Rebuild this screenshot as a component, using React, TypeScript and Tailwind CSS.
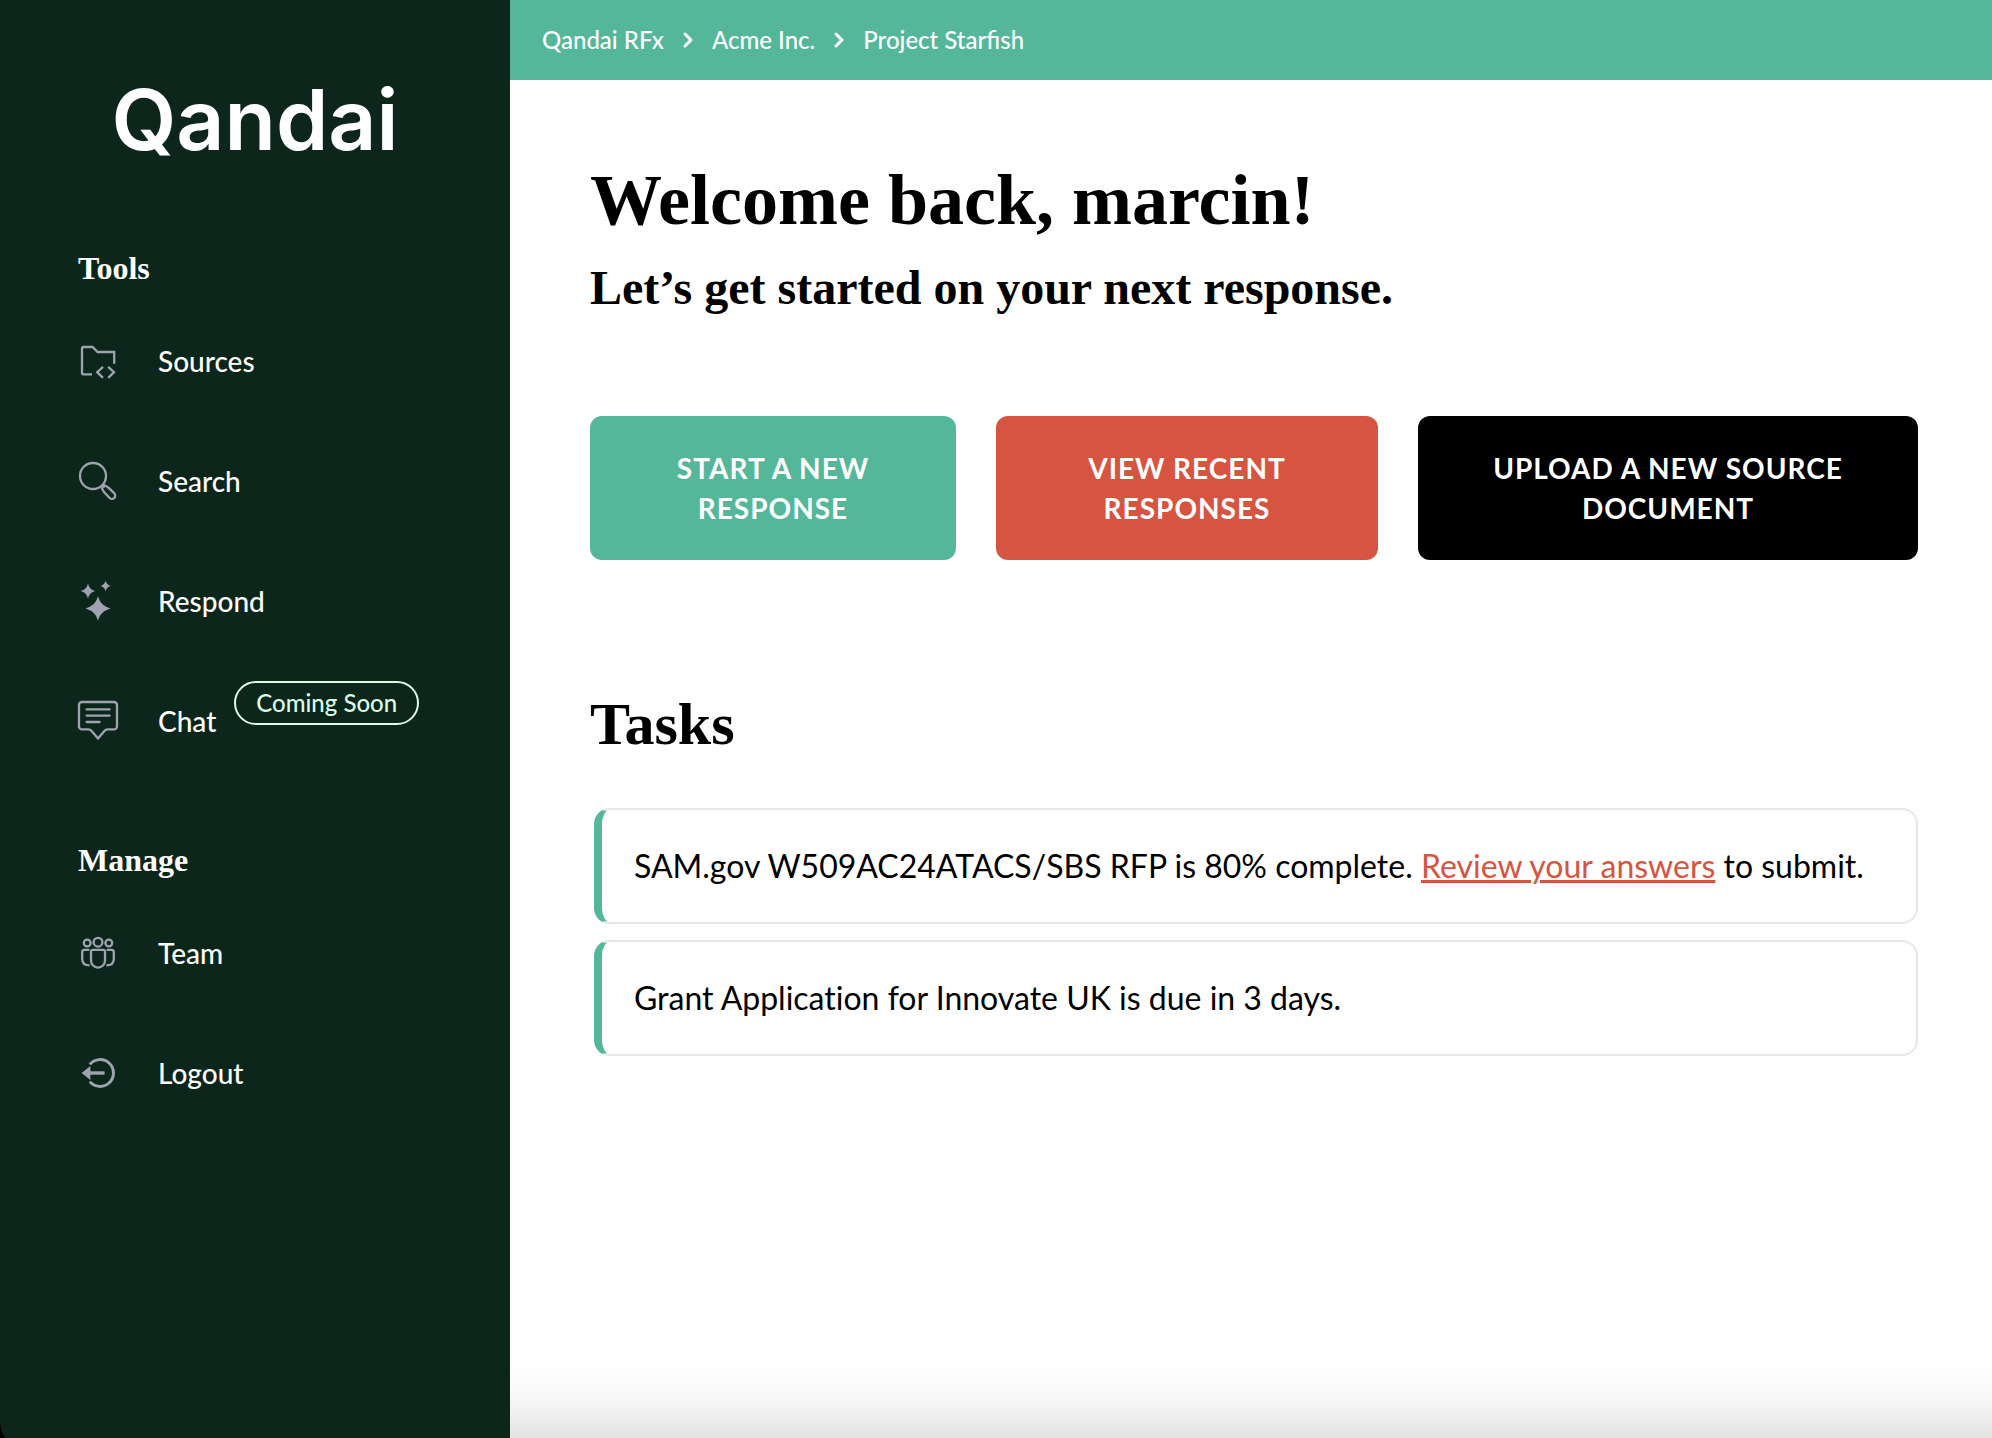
import { Fragment, type ReactNode } from "react";
import { ChevronRight } from "lucide-react";

const serif = "font-['Liberation_Serif',serif]";

type NavItem = { label: string; icon: ReactNode; badge?: string };

function Icon({ children }: { children: ReactNode }) {
  return (
    <svg
      aria-hidden
      viewBox="0 0 40 40"
      className="size-10 shrink-0 overflow-visible text-[#9fa3b0]"
      fill="none"
      stroke="currentColor"
      strokeWidth="2.3"
    >
      {children}
    </svg>
  );
}

const SourcesIcon = () => (
  <Icon>
    <path d="M14 32.4H5.2A1.2 1.2 0 0 1 4 31.2V6.2A1.2 1.2 0 0 1 5.2 5H14.6L19.6 10H36.2V21.8" />
    <path d="M25 24.8L19.2 30.2L25 35.8M30.2 24.8L36 30.2L30.2 35.8" />
  </Icon>
);

const SearchIcon = () => (
  <Icon>
    <circle cx="15" cy="14" r="13" />
    <path d="M23.6 25.2C24.2 27.4 25 28.8 26.2 30.2L31.4 35.8A3.3 3.3 0 0 0 36.4 31.4L31 26.2C29.6 24.8 28.2 23.8 26 23" />
    <path d="M23.6 22.6L26.6 25.6" />
  </Icon>
);

const RespondIcon = () => (
  <Icon>
    <g fill="currentColor" stroke="none">
      <path d="M20 14C22 21 25.4 24.2 32.4 26.4C25.4 28.6 22 31.8 20 38.8C18 31.8 14.6 28.6 7.6 26.4C14.6 24.2 18 21 20 14Z" />
      <path d="M10 1.4C11.3 6 13 7.6 17.4 9C13 10.4 11.3 12 10 16.6C8.7 12 7 10.4 2.6 9C7 7.6 8.7 6 10 1.4Z" />
      <path d="M27.6 -1.2C28.5 1.8 29.7 3 32.8 4C29.7 5 28.5 6.2 27.6 9.2C26.7 6.2 25.5 5 22.4 4C25.5 3 26.7 1.8 27.6 -1.2Z" />
    </g>
  </Icon>
);

const ChatIcon = () => (
  <Icon>
    <path d="M4 0H36A3 3 0 0 1 39 3V24.4A3 3 0 0 1 36 27.4H29.6C28.2 27.4 27.4 27.8 26.6 28.8L20 36.4L13.4 28.8C12.6 27.8 11.8 27.4 10.4 27.4H4A3 3 0 0 1 1 24.4V3A3 3 0 0 1 4 0Z" />
    <path d="M8.6 7.4H31.6M8.6 13.6H31.6M8.6 20H21.6" strokeLinecap="round" />
  </Icon>
);

const TeamIcon = () => (
  <Icon>
    <circle cx="20" cy="8.2" r="4.4" />
    <circle cx="9.2" cy="9" r="3.4" />
    <circle cx="30.8" cy="9" r="3.4" />
    <path d="M14.8 15.8H25.2A1.8 1.8 0 0 1 27 17.6V26.6A7 7 0 0 1 13 26.6V17.6A1.8 1.8 0 0 1 14.8 15.8Z" />
    <path d="M11.4 15.8H6.4A2.2 2.2 0 0 0 4.2 18V25C4.2 28.8 6.6 31.4 11.6 31.4" />
    <path d="M28.6 15.8H33.6A2.2 2.2 0 0 1 35.8 18V25C35.8 28.8 33.4 31.4 28.4 31.4" />
  </Icon>
);

const LogoutIcon = () => (
  <Icon>
    <path d="M11.8 10.4A13.4 13.4 0 1 1 11.8 27.6" strokeWidth="3" />
    <path d="M11 19H26.6" strokeWidth="3.4" />
    <path d="M3.6 19L12.4 12V26Z" fill="currentColor" stroke="none" />
  </Icon>
);

const tools: NavItem[] = [
  { label: "Sources", icon: <SourcesIcon /> },
  { label: "Search", icon: <SearchIcon /> },
  { label: "Respond", icon: <RespondIcon /> },
  { label: "Chat", icon: <ChatIcon />, badge: "Coming Soon" },
];

const manage: NavItem[] = [
  { label: "Team", icon: <TeamIcon /> },
  { label: "Logout", icon: <LogoutIcon /> },
];

const crumbs = ["Qandai RFx", "Acme Inc.", "Project Starfish"];

const actions = [
  { label: "Start a new response", color: "bg-[#55b799]" },
  { label: "View recent responses", color: "bg-[#d65440]" },
  { label: "Upload a new source document", color: "bg-black" },
];

function NavSection({ title, items }: { title: string; items: NavItem[] }) {
  return (
    <section>
      <h2 className={`${serif} text-[32px] leading-8 font-bold`}>{title}</h2>
      <ul className="mt-[18px]">
        {items.map((item) => (
          <li key={item.label}>
            <a href="#" className="flex h-[120px] items-center">
              {item.icon}
              <span className="ml-10 pb-0.5 text-[28px] font-medium">{item.label}</span>
              {item.badge && (
                <span className="mb-[38px] ml-[18px] flex h-11 items-center rounded-full border-2 border-[#dcfce7] px-5 text-2xl font-medium text-[#dcfce7]">
                  {item.badge}
                </span>
              )}
            </a>
          </li>
        ))}
      </ul>
    </section>
  );
}

function Sidebar() {
  return (
    <aside className="w-[510px] shrink-0 bg-black text-white">
      <div className="h-full rounded-bl-[7px_18px] bg-[#0c261b] px-[78px] pt-[68px]">
        <a href="#" className="block text-center font-['Inter',sans-serif] text-[84px] leading-[104px] font-semibold">
          Qandai
        </a>
        <nav className="mt-20 flex flex-col gap-[62px]">
          <NavSection title="Tools" items={tools} />
          <NavSection title="Manage" items={manage} />
        </nav>
      </div>
    </aside>
  );
}

function Breadcrumbs() {
  return (
    <nav aria-label="Breadcrumb" className="flex h-20 items-center gap-3 bg-[#55b799] px-8 text-2xl font-medium text-white">
      {crumbs.map((crumb, i) => (
        <Fragment key={crumb}>
          {i > 0 && <ChevronRight aria-hidden className="size-6" strokeWidth={3} />}
          <a href="#">{crumb}</a>
        </Fragment>
      ))}
    </nav>
  );
}

function Task({ children }: { children: ReactNode }) {
  return (
    <li className="rounded-2xl border-2 border-l-8 border-[#e5e7eb] border-l-[#55b799] px-8 py-9 text-[32px] leading-10 [font-variant-ligatures:no-common-ligatures]">
      {children}
    </li>
  );
}

export default function App() {
  return (
    <div className="relative flex min-h-screen bg-white font-['Lato',sans-serif] text-black">
      <Sidebar />
      <div className="min-w-0 flex-1">
        <Breadcrumbs />
        <main className="pt-20 pr-[74px] pl-20">
          <h1 className={`${serif} text-[72px] leading-20 font-bold`}>Welcome back, marcin!</h1>
          <p className={`${serif} mt-6 text-[48px] leading-12 font-bold`}>Let’s get started on your next response.</p>

          <div className="mt-[104px] grid grid-cols-[366fr_382fr_500fr] gap-10">
            {actions.map((action) => (
              <button
                key={action.label}
                className={`${action.color} rounded-xl px-16 py-8 text-[28px] leading-10 font-bold tracking-[1px] text-white uppercase`}
              >
                {action.label}
              </button>
            ))}
          </div>

          <h2 className={`${serif} mt-[132px] text-[60px] leading-16 font-bold`}>Tasks</h2>
          <ul className="mt-[52px] ml-1 flex flex-col gap-4">
            <Task>
              SAM.gov W509AC24ATACS/SBS RFP is 80% complete.{" "}
              <a href="#" className="text-[#d65440] underline decoration-3">
                Review your answers
              </a>{" "}
              to submit.
            </Task>
            <Task>Grant Application for Innovate UK is due in 3 days.</Task>
          </ul>
        </main>
      </div>
      {/* soft shade along the bottom edge */}
      <div
        aria-hidden
        className="pointer-events-none absolute right-0 bottom-0 left-[510px] h-20 bg-linear-to-b from-transparent via-black/3 to-black/11"
      />
    </div>
  );
}
